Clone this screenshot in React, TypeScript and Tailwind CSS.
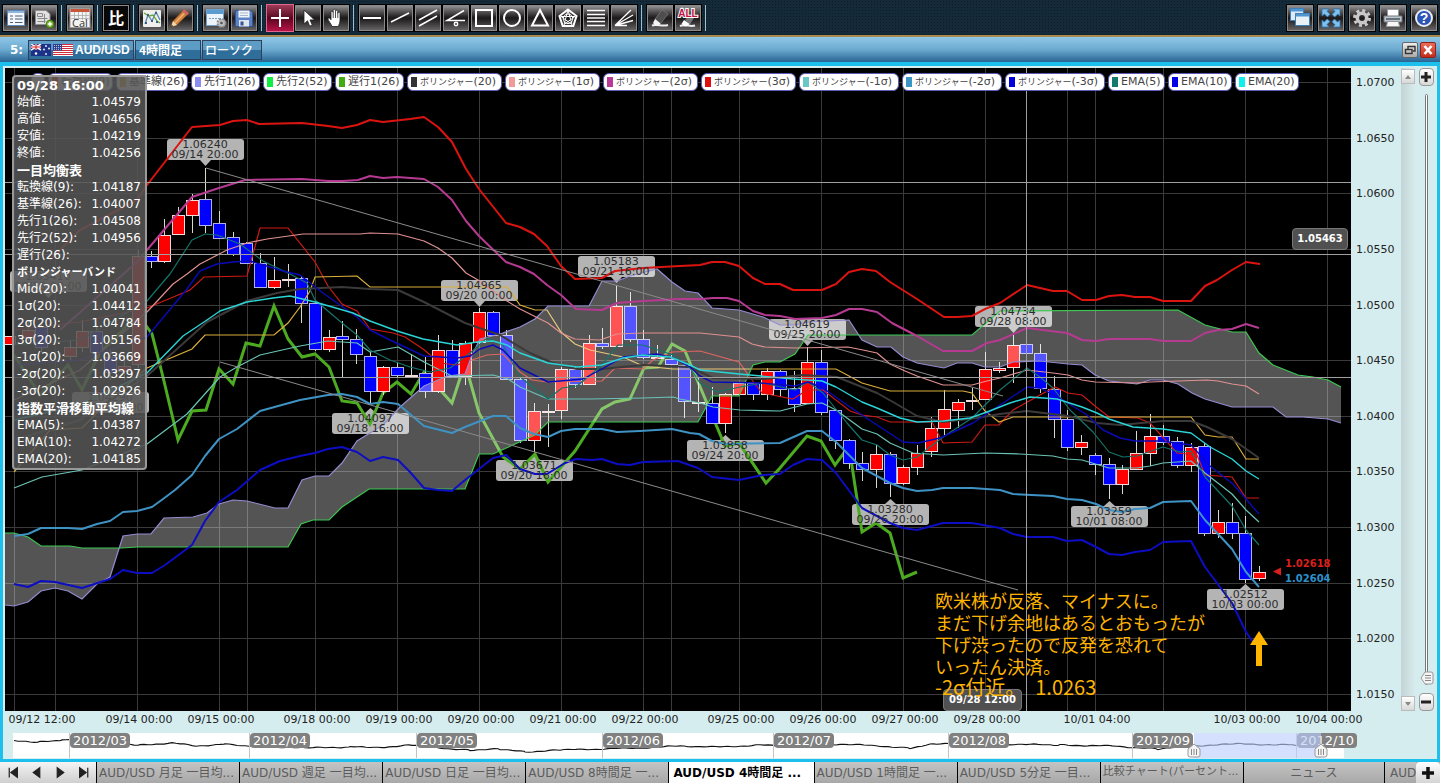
import React from "react";

type Side = "up" | "down";
type Candle = [number, number, number, number, number, "r" | "b"];

const H_GRID = [83, 139, 194, 250, 306, 361, 417, 472, 528, 584, 639, 695];
const V_GRID = [14, 55, 137, 219, 247, 315, 397, 479, 561, 643, 671, 739, 821, 903, 985, 1067, 1095, 1163, 1245, 1327];
const PRICES = ["1.0700", "1.0650", "1.0600", "1.0550", "1.0500", "1.0450", "1.0400", "1.0350", "1.0300", "1.0250", "1.0200", "1.0150"];

const TIMES: [number, string][] = [
  [42, "09/12 12:00"], [139, "09/14 00:00"], [221, "09/15 00:00"], [317, "09/18 00:00"], [399, "09/19 00:00"],
  [481, "09/20 00:00"], [563, "09/21 00:00"], [645, "09/22 00:00"], [741, "09/25 00:00"], [823, "09/26 00:00"],
  [905, "09/27 00:00"], [987, "09/28 00:00"], [1097, "10/01 04:00"], [1247, "10/03 00:00"], [1329, "10/04 00:00"],
];

// centre x, body top, body bottom, high, low, colour
const CANDLES: Candle[] = [
  [9, 336, 344, 336, 344, "r"], [28, 330, 337, 320, 341, "r"], [41, 327, 347, 320, 352, "b"], [70, 347, 356, 340, 360, "r"],
  [82, 331, 347, 320, 352, "r"], [96, 331, 352, 322, 358, "b"], [110, 357, 372, 350, 380, "b"], [124, 366, 371, 360, 380, "r"],
  [138, 256, 364, 250, 368, "r"], [151, 256, 261, 251, 268, "b"], [164, 235, 261, 219, 263, "r"], [178, 215, 234, 207, 235, "r"],
  [192, 200, 215, 194, 233, "r"], [205, 199, 225, 168, 233, "b"], [219, 223, 238, 211, 239, "b"], [233, 237, 254, 232, 256, "b"],
  [246, 243, 263, 242, 264, "b"], [260, 263, 287, 253, 288, "b"], [274, 280, 287, 257, 289, "r"], [288, 279, 280, 264, 287, "r"],
  [301, 278, 303, 276, 323, "b"], [315, 303, 349, 302, 351, "b"], [329, 337, 349, 330, 352, "r"], [342, 336, 339, 321, 377, "b"],
  [356, 339, 354, 329, 364, "b"], [370, 356, 391, 352, 404, "b"], [383, 367, 391, 366, 395, "r"], [397, 367, 375, 363, 377, "b"],
  [411, 375, 376, 354, 377, "r"], [425, 373, 391, 357, 398, "b"], [438, 350, 391, 335, 393, "r"], [452, 350, 376, 340, 377, "b"],
  [465, 343, 376, 341, 385, "r"], [479, 312, 342, 308, 345, "r"], [493, 312, 335, 311, 336, "b"], [506, 335, 379, 330, 380, "b"],
  [520, 379, 440, 378, 443, "b"], [534, 411, 440, 403, 452, "r"], [548, 411, 412, 404, 447, "r"], [561, 369, 410, 367, 419, "r"],
  [575, 369, 384, 367, 388, "b"], [589, 343, 384, 335, 385, "r"], [602, 343, 346, 328, 349, "b"], [616, 306, 346, 285, 347, "r"],
  [630, 306, 339, 292, 342, "b"], [643, 339, 357, 330, 359, "b"], [657, 357, 358, 345, 359, "r"], [671, 359, 364, 355, 367, "b"],
  [684, 365, 401, 363, 418, "b"], [698, 402, 403, 378, 412, "r"], [712, 403, 423, 387, 424, "b"], [725, 394, 423, 393, 433, "r"],
  [739, 383, 394, 382, 395, "r"], [753, 383, 394, 382, 400, "b"], [767, 371, 394, 368, 400, "r"], [780, 371, 389, 370, 397, "b"],
  [794, 388, 404, 371, 412, "b"], [807, 362, 403, 347, 404, "r"], [821, 362, 412, 350, 415, "b"], [835, 410, 440, 409, 449, "b"],
  [849, 440, 463, 439, 469, "b"], [862, 463, 469, 452, 481, "b"], [876, 454, 469, 445, 488, "r"], [890, 454, 483, 452, 497, "b"],
  [903, 467, 483, 465, 485, "r"], [917, 453, 467, 445, 475, "r"], [931, 428, 451, 417, 457, "r"], [944, 409, 428, 390, 435, "r"],
  [958, 402, 410, 399, 428, "r"], [972, 400, 401, 388, 410, "r"], [985, 369, 399, 352, 400, "r"], [999, 368, 370, 362, 373, "r"],
  [1013, 345, 367, 335, 383, "r"], [1026, 344, 353, 340, 356, "b"], [1040, 353, 388, 344, 393, "b"], [1054, 389, 419, 376, 438, "b"],
  [1067, 419, 447, 410, 451, "b"], [1081, 442, 447, 435, 455, "r"], [1095, 455, 464, 453, 475, "b"], [1109, 464, 484, 458, 499, "b"],
  [1122, 469, 484, 465, 494, "r"], [1136, 453, 469, 431, 470, "r"], [1150, 436, 453, 414, 466, "r"], [1163, 436, 442, 425, 445, "b"],
  [1177, 441, 465, 437, 468, "b"], [1191, 447, 465, 443, 472, "r"], [1204, 446, 533, 443, 536, "b"], [1218, 522, 533, 510, 538, "r"],
  [1232, 522, 533, 503, 539, "b"], [1245, 533, 579, 516, 583, "b"], [1259, 572, 578, 566, 581, "r"],
];

const CALLOUTS: [number, number, Side, string, string][] = [
  [48, 271, "down", "1.05410", "09/13 00:00"],
  [110, 392, "up", "1.04290", "09/13 20:00"],
  [205, 139, "down", "1.06240", "09/14 20:00"],
  [616, 256, "down", "1.05183", "09/21 16:00"],
  [479, 280, "down", "1.04965", "09/20 00:00"],
  [370, 413, "up", "1.04097", "09/18 16:00"],
  [534, 460, "up", "1.03671", "09/20 16:00"],
  [807, 319, "down", "1.04619", "09/25 20:00"],
  [725, 440, "up", "1.03858", "09/24 20:00"],
  [1013, 306, "down", "1.04734", "09/28 08:00"],
  [890, 504, "up", "1.03280", "09/26 20:00"],
  [1109, 506, "up", "1.03259", "10/01 08:00"],
  [1245, 589, "up", "1.02512", "10/03 00:00"],
];

const SPAN_B = "5,533 14,533 28,537 41,546 70,546 82,548 122,548 137,547 288,547 301,524 313,520 329,520 342,507 369,489 465,489 479,454 493,454 535,435 548,422 698,422 712,396 739,396 753,365 765,362 780,362 795,354 808,335 972,335 1000,311 1178,310 1205,325 1232,332 1246,332 1259,353 1273,365 1298,375 1313,377 1328,380 1341,387";
const SPAN_A = "5,605 14,606 28,602 41,591 55,588 68,591 82,599 97,584 110,577 123,536 137,534 151,534 164,518 193,517 207,513 219,504 233,500 247,501 275,508 288,508 302,480 315,476 329,476 342,463 357,441 370,433 383,425 400,407 424,386 438,380 447,376 465,374 472,355 480,339 500,334 520,327 535,319 548,306 589,306 602,281 617,281 630,276 657,269 672,282 685,291 698,293 712,308 739,310 763,317 780,325 795,325 808,322 849,320 862,340 877,347 891,347 903,357 917,363 944,368 957,363 972,363 985,367 1000,367 1013,362 1040,361 1068,364 1082,365 1095,375 1109,381 1137,384 1150,380 1163,380 1178,384 1192,393 1205,399 1232,407 1273,407 1286,417 1303,417 1328,419 1341,423";
const CLOUD = SPAN_A + " " + SPAN_B.split(" ").reverse().join(" ");

const CHIKOU = "14,355 40,395 68,365 82,390 100,352 123,330 137,312 147,327 152,334 163,377 178,440 192,411 206,410 219,369 233,384 246,343 260,346 274,306 288,339 302,357 315,354 329,367 342,401 357,403 370,424 383,393 397,382 411,394 424,372 452,403 465,363 479,413 503,457 520,469 535,454 548,482 575,451 602,409 615,402 630,399 644,368 658,367 672,344 685,351 725,446 739,443 766,483 780,468 807,436 821,441 835,465 849,446 862,532 876,523 890,533 903,578 917,572";

const TENKAN = "14,330 80,322 147,308 190,290 204,277 247,276 260,228 288,228 315,262 328,286 342,304 357,311 370,329 393,333 405,337 423,349 440,363 457,365 472,360 487,355 503,354 520,372 532,380 547,382 602,381 615,368 643,369 653,360 672,352 700,351 739,362 752,380 762,393 793,399 807,390 823,390 850,411 862,415 877,417 890,422 932,422 943,443 972,442 985,425 999,425 1013,410 1040,395 1055,387 1068,393 1082,395 1095,406 1109,417 1138,418 1150,423 1177,453 1197,455 1205,475 1232,477 1246,498 1259,498";
const KIJUN = "14,472 50,430 82,428 110,400 147,368 192,349 205,335 274,335 288,323 300,307 310,291 315,277 357,276 370,287 507,287 520,305 535,310 547,310 561,332 575,344 590,350 623,357 643,366 673,369 836,369 862,383 890,391 963,391 972,393 985,411 999,422 1013,417 1191,417 1205,435 1218,437 1232,437 1246,459 1259,459";

const LINES: { name: string; color: string; width: number; points: string }[] = [
  { name: "mid", color: "#3b3939", width: 2, points: "14,440 80,420 147,376 207,322 247,301 277,293 300,289 342,287 370,289 398,290 424,302 465,323 500,335 530,353 553,363 577,369 602,369 643,365 690,367 713,378 763,379 803,375 837,377 862,387 877,393 893,402 917,416 943,422 977,418 1000,414 1027,411 1068,416 1097,423 1120,425 1163,421 1191,421 1207,427 1232,439 1259,458" },
  { name: "s1", color: "#e09090", width: 1.2, points: "14,400 80,370 147,312 173,284 187,274 200,264 227,250 247,243 267,239 303,234 360,234 370,233 398,234 424,241 438,248 452,258 466,273 478,280 507,301 520,309 548,323 561,333 575,339 600,340 617,334 643,333 700,333 739,337 752,344 765,347 795,348 848,347 863,350 877,353 890,364 905,371 917,376 943,385 972,385 987,381 1000,378 1027,370 1053,373 1068,375 1082,380 1095,382 1137,383 1150,382 1207,380 1218,381 1232,384 1246,386 1259,394" },
  { name: "s2", color: "#b63a92", width: 2, points: "60,330 137,262 147,250 192,197 219,188 245,180 302,179 328,181 343,181 358,180 370,176 383,178 397,177 424,179 438,187 452,200 466,221 479,236 506,262 520,267 534,274 547,285 561,295 576,309 602,310 617,303 643,301 680,299 702,299 713,298 727,298 739,301 753,311 765,315 780,316 795,319 822,318 836,315 849,309 862,309 877,312 892,323 917,336 943,351 972,351 987,343 1000,340 1027,328 1067,333 1082,340 1096,341 1109,339 1150,339 1163,341 1191,341 1205,333 1218,330 1232,329 1246,324 1259,328" },
  { name: "s3", color: "#dc1410", width: 2, points: "50,260 80,230 137,200 147,185 192,127 220,125 233,121 247,120 259,124 302,123 328,126 342,128 357,125 370,120 383,122 410,119 424,117 438,127 452,142 466,169 479,189 506,223 520,227 534,234 547,246 561,266 575,279 602,278 615,271 643,268 680,266 700,265 712,262 725,262 739,266 753,278 765,284 780,284 793,290 822,290 836,284 849,272 862,269 876,271 890,282 917,299 944,317 957,317 972,316 985,309 1000,303 1027,285 1053,291 1067,291 1082,300 1096,300 1109,296 1122,295 1135,297 1150,297 1163,301 1191,301 1205,286 1217,280 1232,270 1246,262 1260,264" },
  { name: "m1", color: "#6ac4b6", width: 1.2, points: "14,488 42,477 82,470 147,444 187,414 220,377 237,367 260,355 300,346 328,341 357,343 370,352 398,347 412,355 424,362 440,370 452,376 493,375 508,379 520,387 548,399 590,399 643,398 673,397 680,399 700,403 713,407 740,410 780,411 807,404 822,403 836,410 862,429 877,434 890,443 913,453 943,455 985,453 1020,454 1053,456 1067,459 1082,460 1109,468 1137,468 1150,466 1163,463 1191,461 1205,473 1232,494 1246,510 1259,522" },
  { name: "m2", color: "#3e92c4", width: 2, points: "14,536 28,534 41,528 68,528 82,529 97,524 110,521 123,512 137,511 152,507 163,499 175,490 192,475 205,456 219,439 237,429 260,411 300,400 328,395 342,394 357,397 370,404 383,402 398,404 424,426 452,433 465,427 493,416 506,416 520,428 534,434 548,437 561,431 575,429 602,429 617,432 640,431 672,429 690,433 699,434 712,441 725,444 780,443 807,431 822,431 836,442 862,468 890,483 903,488 917,491 932,490 943,488 972,488 1000,490 1013,494 1053,496 1067,499 1082,500 1096,504 1109,510 1122,512 1135,509 1150,508 1163,502 1191,501 1205,520 1232,549 1246,572 1259,587" },
  { name: "m3", color: "#0d0dc4", width: 2, points: "14,584 28,587 41,581 55,582 82,588 110,579 123,570 137,573 152,573 165,565 192,545 205,521 219,502 237,490 260,470 280,461 300,456 315,453 328,449 342,447 357,452 370,461 383,457 398,460 410,472 424,488 438,490 452,491 465,480 493,458 506,455 520,469 535,474 547,474 565,463 576,459 592,460 602,459 617,464 630,465 643,462 678,461 698,468 712,477 739,480 763,475 780,474 793,465 807,459 822,460 836,473 862,508 890,523 903,528 917,530 943,523 972,523 1000,528 1013,534 1027,537 1053,537 1067,541 1082,540 1096,547 1109,554 1122,555 1135,552 1150,550 1163,542 1191,541 1205,567 1217,583 1232,603 1246,632 1255,645" },
  { name: "ema5", color: "#14756a", width: 1.2, points: "14,345 80,340 147,301 170,274 192,240 205,234 217,235 240,244 263,261 290,274 307,283 315,300 342,323 357,335 370,350 390,360 410,367 430,372 450,368 470,353 487,338 503,345 520,377 548,399 562,388 577,386 600,367 618,345 643,345 673,355 690,368 700,383 717,392 740,387 763,383 795,390 808,382 823,393 847,423 862,440 877,445 890,455 903,460 917,457 943,437 972,418 1000,390 1027,368 1040,377 1053,388 1070,410 1093,432 1109,452 1123,457 1137,456 1163,447 1180,452 1191,451 1205,477 1232,506 1246,530 1259,545" },
  { name: "ema10", color: "#0a0ab8", width: 1.4, points: "14,365 80,360 147,337 187,289 200,271 217,264 233,262 250,261 283,271 300,275 323,293 357,317 370,330 390,340 424,356 457,358 470,356 480,349 493,345 503,350 520,368 548,382 583,379 602,369 623,357 657,354 673,358 690,367 700,376 712,382 760,383 795,386 808,382 823,388 847,405 877,425 903,442 918,443 940,438 973,423 1000,405 1027,387 1040,388 1063,400 1087,415 1103,430 1120,438 1135,441 1160,441 1191,445 1210,466 1233,484 1259,514" },
  { name: "ema20", color: "#2bd4d6", width: 1.4, points: "14,420 80,405 147,373 183,336 207,320 220,311 247,302 273,298 290,296 315,302 353,313 370,321 397,331 423,339 457,345 477,342 493,341 507,345 520,353 548,363 577,367 602,365 623,358 643,355 670,357 690,365 700,370 739,374 793,379 822,381 836,387 862,402 877,408 900,418 917,422 943,421 970,418 987,412 1010,403 1030,397 1057,399 1082,407 1097,413 1109,419 1133,427 1163,429 1191,433 1210,447 1232,459 1246,471 1259,479" },
];

const LEGEND: { kana?: string; text: string; color: string; w: string }[] = [
  { text: "", color: "bg-white", w: "w-[14px]" },
  { text: "転換線(9)", color: "bg-[#dd2211]", w: "w-[65px]" },
  { text: "基準線(26)", color: "bg-[#e0a020]", w: "w-[72px]" },
  { text: "先行1(26)", color: "bg-[#8b8bf0]", w: "w-[69px]" },
  { text: "先行2(52)", color: "bg-[#10ee44]", w: "w-[69px]" },
  { text: "遅行1(26)", color: "bg-[#43ab12]", w: "w-[69px]" },
  { kana: "ボリンジャー", text: "(20)", color: "bg-[#333333]", w: "w-[95px]" },
  { kana: "ボリンジャー", text: "(1σ)", color: "bg-[#f29a9a]", w: "w-[95px]" },
  { kana: "ボリンジャー", text: "(2σ)", color: "bg-[#b93a94]", w: "w-[95px]" },
  { kana: "ボリンジャー", text: "(3σ)", color: "bg-[#e00f0f]", w: "w-[95px]" },
  { kana: "ボリンジャー", text: "(-1σ)", color: "bg-[#68c8c8]", w: "w-[100px]" },
  { kana: "ボリンジャー", text: "(-2σ)", color: "bg-[#3a95c6]", w: "w-[100px]" },
  { kana: "ボリンジャー", text: "(-3σ)", color: "bg-[#0000dd]", w: "w-[100px]" },
  { text: "EMA(5)", color: "bg-[#147a6c]", w: "w-[57px]" },
  { text: "EMA(10)", color: "bg-[#0000e6]", w: "w-[64px]" },
  { text: "EMA(20)", color: "bg-[#12eeee]", w: "w-[64px]" },
];

const INFO: [string, string?][] = [
  ["始値:", "1.04579"], ["高値:", "1.04656"], ["安値:", "1.04219"], ["終値:", "1.04256"],
  ["一目均衡表"],
  ["転換線(9):", "1.04187"], ["基準線(26):", "1.04007"], ["先行1(26):", "1.04508"], ["先行2(52):", "1.04956"], ["遅行(26):", ""],
  ["ボリンジャーバンド"],
  ["Mid(20):", "1.04041"], ["1σ(20):", "1.04412"], ["2σ(20):", "1.04784"], ["3σ(20):", "1.05156"],
  ["-1σ(20):", "1.03669"], ["-2σ(20):", "1.03297"], ["-3σ(20):", "1.02926"],
  ["指数平滑移動平均線"],
  ["EMA(5):", "1.04387"], ["EMA(10):", "1.04272"], ["EMA(20):", "1.04185"],
];

const NOTE = ["欧米株が反落、マイナスに。", "まだ下げ余地はあるとおもったが", "下げ渋ったので反発を恐れて", "いったん決済。"];
const NOTE_PRICE = "-2σ付近。　1.0263";

const TABS = [
  "AUD/USD 月足 一目均...", "AUD/USD 週足 一目均...", "AUD/USD 日足 一目均...", "AUD/USD 8時間足 一...", "AUD/USD 4時間足 ...",
  "AUD/USD 1時間足 一...", "AUD/USD 5分足 一目...", "比較チャート(パーセント...", "ニュース",
];

const MONTHS: [number, string][] = [
  [69, "2012/03"], [249, "2012/04"], [416, "2012/05"], [602, "2012/06"], [773, "2012/07"], [948, "2012/08"], [1132, "2012/09"], [1296, "2012/10"],
];

const MINI_BASE: [number, number][] = [
  [14, 741], [40, 742], [62, 740], [80, 740], [110, 742], [140, 745], [172, 743], [196, 746], [225, 744], [250, 746], [305, 748],
  [350, 747], [385, 747], [412, 745], [440, 748], [470, 750], [500, 749], [525, 752], [560, 750], [600, 749], [640, 748], [680, 746],
  [720, 747], [760, 745], [800, 747], [840, 744], [880, 746], [910, 748], [933, 744], [990, 744], [1060, 745], [1112, 746],
  [1158, 749], [1190, 746], [1237, 744], [1294, 745], [1323, 747],
];

function miniPoints(): string {
  const out: string[] = [];
  for (let k = 0; k < MINI_BASE.length - 1; k++) {
    const [x0, y0] = MINI_BASE[k];
    const [x1, y1] = MINI_BASE[k + 1];
    for (let x = x0; x < x1; x += 4) {
      const base = y0 + ((y1 - y0) * (x - x0)) / (x1 - x0);
      const noise = Math.sin(x * 1.7) * 0.4 + Math.sin(x * 0.43) * 0.3;
      out.push(`${x},${(base + noise).toFixed(1)}`);
    }
  }
  return out.join(" ");
}

const W = { stroke: "#fff", strokeWidth: 2, fill: "none" } as const;
const T = { stroke: "#fff", strokeWidth: 1.3, fill: "none" } as const;

const I: Record<string, React.ReactNode> = {
  list: (
    <g>
      <rect x="3.5" y="4.5" width="17" height="15" fill="#f4f8fc" stroke="#5d88b8" />
      <rect x="4" y="5" width="16" height="2" fill="#8fb5dc" />
      <path d="M6 10h3M6 13h3M6 16.500h3M11 10h7.500M11 13h7.500M11 16.500h7.500" stroke="#4c5f78" strokeWidth="1.2" />
    </g>
  ),
  add: (
    <g>
      <path d="M3.500 4.500H14l4 3.500V18.500H3.500Z" fill="#e2e2e2" stroke="#8d8d8d" />
      <path d="M5.500 7.500h5v3h-5zM5.500 12.500h10M5.500 15.500h8M12.500 8v9" stroke="#888" fill="none" />
      <circle cx="18" cy="18" r="3.800" fill="#79b530" stroke="#467a12" />
      <path d="M18 15.800v4.400M15.800 18h4.400" stroke="#fff" strokeWidth="1.4" />
    </g>
  ),
  cal: (
    <g>
      <rect x="2" y="2.500" width="20" height="19" fill="#f3f3f3" stroke="#999" />
      <rect x="2.500" y="3" width="19" height="3" fill="#c9553b" />
      <path d="M3 9.500h18M3 12.500h18M6.500 6v8M10.500 6v8M14.500 6v8M18 6v8" stroke="#a9a9a9" strokeWidth=".8" />
      <text x="12" y="20.500" fontSize="11" textAnchor="middle" fill="#333" fontFamily="Open Sans, sans-serif">Cal</text>
    </g>
  ),
  compare: (
    <g>
      <rect width="24" height="24" fill="#080808" />
      <text x="12" y="18" fontSize="16" fontWeight="700" textAnchor="middle" fill="#fff" fontFamily="Noto Sans CJK JP, sans-serif">比</text>
    </g>
  ),
  chart: (
    <g>
      <rect x="3" y="4" width="18" height="17" rx="1" fill="#efefec" />
      <path d="M5 18 8 9l4 6 4-9 4 8" stroke="#5b86b7" fill="none" strokeWidth="1.3" />
      <path d="M4 7l5 3 4-1 4 6 3 2" stroke="#68a53c" fill="none" strokeWidth="1.3" />
      <path d="M7 8h2v2H7zM11 14h2v2h-2zM15 6h2v2h-2zM16 15h2v2h-2zM5 16h2v2H5z" fill="#3b5f8a" />
    </g>
  ),
  pencil: (
    <g>
      <path d="M3 21l2-6L16 3.500l4.500 4L9 19z" fill="#cd803c" stroke="#83471b" strokeWidth=".8" />
      <path d="M7 17 18 5.500" stroke="#eeb375" strokeWidth="1.5" />
      <path d="M14 5.500l2-2.500 5 4-2 2.500z" fill="#c9655a" />
      <path d="M3 21l2-6 4 4z" fill="#f0d9ae" />
      <path d="M3 21l.8-2.300 1.500 1.500z" fill="#222" />
    </g>
  ),
  config: (
    <g>
      <rect x="2.500" y="3.500" width="17" height="16" fill="#edf3f8" stroke="#6fa1cb" />
      <rect x="3" y="4" width="16" height="4" fill="#5c9bd0" />
      <path d="M5 12.500h12" stroke="#6fa1cb" strokeDasharray="2 1" />
      <circle cx="17.500" cy="17" r="4" fill="#c3c3c3" stroke="#8b8b8b" strokeWidth="2" strokeDasharray="2 1.200" />
      <circle cx="17.500" cy="17" r="3" fill="#bdbdbd" />
      <circle cx="17.500" cy="17" r="1.300" fill="#555" />
    </g>
  ),
  save: (
    <g>
      <path d="M3.500 4.500h15l2 2V20.500h-17z" fill="#5a83c9" stroke="#31529a" />
      <rect x="6.500" y="4.500" width="11" height="7" fill="#f2f5fa" />
      <path d="M8 7h8M8 9.500h8" stroke="#aab7cb" />
      <rect x="7" y="14" width="10" height="6.500" fill="#dfe6f0" />
      <rect x="8.500" y="15.500" width="3" height="4" fill="#39558f" />
    </g>
  ),
  cross: <path d="M12 3v18M3 12h18" {...W} />,
  pointer: <path d="M8 4v14l3.500-3.200 2.200 5.400 2.600-1.100-2.300-5.200H18.500z" fill="#fff" stroke="#222" strokeWidth=".8" />,
  hand: (
    <path d="M8 20.500c-1-3-4-6-4-7.500 0-1.400 1.600-1.400 3 .7V6.500c0-1.700 2.200-1.700 2.200 0V4.500c0-1.800 2.300-1.800 2.300 0v1c0-1.700 2.300-1.700 2.300 0v1.700c0-1.500 2.200-1.500 2.200 0V14c0 3-1 4-1.500 6.500zM9.200 6.500V12M11.500 5.500V12M13.800 6.500V12" fill="#fff" stroke="#222" strokeWidth=".8" />
  ),
  hline: <path d="M3 12h18" {...W} />,
  trend: <path d="M3 16 21 7" {...T} strokeWidth={1.5} />,
  parallel: <path d="M3 14 21 4M3 20 21 10" {...T} strokeWidth={1.5} />,
  angle: (
    <g {...T} strokeWidth={1.5}>
      <path d="M20 4.500 3 14.500h18" />
      <circle cx="12" cy="18" r="1.700" />
    </g>
  ),
  square: <rect x="4" y="4" width="16" height="16" {...W} />,
  circle: <circle cx="12" cy="12" r="8" {...W} />,
  triangle: <path d="M12 4 20 19.500H4Z" {...W} />,
  penta: (
    <g {...T}>
      <path d="M12 3.500 20.500 10 17.300 20H6.700L3.500 10Z" strokeWidth="2" />
      <circle cx="12" cy="12.800" r="4.800" strokeWidth="1" />
      <path d="M12 4 16 18.500 5 10.500h14L8 18.500z" strokeWidth="1" />
    </g>
  ),
  fib: <path d="M3 4.500h18M3 8.500h18M3 12h18M3 15.500h18M3 19.500h18" {...T} />,
  fan: <path d="M3 19.500 19 4M3 19.500 21 9M3 19.500 21 14.500M3 19.500h12" {...T} />,
  eraser: (
    <g>
      <path d="M4 19.500c5-2 10 1.500 16-.5" stroke="#eee" strokeWidth="2" fill="none" />
      <path d="M7 13 14 4l6 4-7.500 9.500z" fill="#4e4e4e" stroke="#777" strokeWidth=".8" />
      <path d="M7 13l5.500 4.500-2 2-3 .5L5 17z" fill="#f4f4f4" />
    </g>
  ),
  eraseAll: (
    <g>
      <path d="M4 20c5-2 10 1 15-.5" stroke="#eee" strokeWidth="2" fill="none" />
      <path d="M9 14 13 9l5 3-4.500 7z" fill="#777" />
      <path d="M8 14l5.500 4-2 2-3 .5L5.500 18z" fill="#fff" />
      <text x="12" y="10.500" fontSize="10" fontWeight="700" textAnchor="middle" fill="#c4103f" stroke="#fff" strokeWidth="2" paintOrder="stroke" fontFamily="Liberation Sans, sans-serif">ALL</text>
    </g>
  ),
  windows: (
    <g stroke="#3f80b8">
      <rect x="2.500" y="2.500" width="13" height="12" fill="#dfeaf3" />
      <rect x="3" y="3" width="12" height="2.500" fill="#4f97d2" stroke="none" />
      <rect x="7.500" y="7.500" width="14" height="12" fill="#e9f0f6" />
      <rect x="8" y="8" width="13" height="2.500" fill="#4f97d2" stroke="none" />
    </g>
  ),
  expand: (
    <g fill="#7fc0ee" stroke="#2c73b0" strokeWidth=".8">
      <path d="M3 3h7L8 5.200l3 3L8.500 11l-3-3L3 10z" />
      <path d="M21 3v7l-2.200-2-3 3L13 8.500l3-3L14 3z" />
      <path d="M3 21v-7l2.200 2 3-3L11 15.500l-3 3 2 2.500z" />
      <path d="M21 21h-7l2-2.200-3-3L15.500 13l3 3 2.500-2z" />
    </g>
  ),
  gear: (
    <g>
      <circle cx="12" cy="12" r="7.500" fill="none" stroke="#c9c9c9" strokeWidth="3" strokeDasharray="3 2.890" />
      <circle cx="12" cy="12" r="4.700" fill="none" stroke="#c9c9c9" strokeWidth="3.600" />
    </g>
  ),
  print: (
    <g>
      <rect x="6.500" y="3.500" width="11" height="7" fill="#fff" stroke="#999" />
      <path d="M3 10h18v6H3z" fill="#bcc5cd" stroke="#717980" />
      <path d="M5 13h14" stroke="#4b545c" strokeWidth="1.500" />
      <path d="M6.500 15.500h11l1 5h-13z" fill="#f6f6f6" stroke="#999" />
    </g>
  ),
  help: (
    <g>
      <circle cx="12" cy="12" r="8" fill="#2c54b6" stroke="#e8edf6" strokeWidth="2" />
      <text x="12" y="17" fontSize="14" fontWeight="700" textAnchor="middle" fill="#fff" fontFamily="Liberation Sans, sans-serif">?</text>
    </g>
  ),
};

const GROUPS: string[][] = [
  ["list", "add"], ["cal"], ["compare"], ["chart", "pencil"], ["config", "save"], ["cross", "pointer", "hand"],
  ["hline", "trend", "parallel", "angle", "square", "circle", "triangle", "penta", "fib", "fan"], ["eraser", "eraseAll"],
];

function ToolButton({ name }: { name: string }) {
  const active = name === "cross";
  return (
    <button
      type="button"
      aria-label={name}
      className={
        active
          ? "flex h-7 w-7 items-center justify-center border border-[#e0688c] bg-linear-to-b from-[#a03a58] via-[#5a0720] to-[#b8124a]"
          : "flex h-7 w-7 items-center justify-center border border-black bg-linear-to-b from-[#9d9b9c] via-[#1b191a] to-[#6b696a] inset-ring inset-ring-[#8a8a8a]"
      }
    >
      <svg viewBox="0 0 24 24" className="h-6 w-6 shrink-0">{I[name]}</svg>
    </button>
  );
}

function Toolbar() {
  return (
    <header className="flex h-[37px] items-center justify-between border-b-2 border-[#a8894e] bg-[#152a38] bg-[radial-gradient(#0d1c27_1px,transparent_1px)] bg-size-[3px_3px] pr-0.5 pl-0.5">
      <div className="flex items-center">
        {GROUPS.map((g) => (
          <div key={g[0]} className="flex items-center">
            {g.map((n) => <ToolButton key={n} name={n} />)}
            <span className="mr-1 ml-[3px] h-[26px] w-px bg-[#9fbfd0]" />
          </div>
        ))}
      </div>
      <div className="flex items-center gap-[3px]">
        {["windows", "expand", "gear", "print", "help"].map((n) => <ToolButton key={n} name={n} />)}
      </div>
    </header>
  );
}

function Flags() {
  return (
    <svg viewBox="0 0 42 12" className="h-3 w-[42px] shrink-0">
      <rect width="20" height="12" fill="#1c3289" />
      <path d="M0 0l10 6M10 0 0 6" stroke="#fff" strokeWidth="1.500" />
      <path d="M5 0v6M0 3h10" stroke="#fff" strokeWidth="2.200" />
      <path d="M5 0v6M0 3h10" stroke="#d22" strokeWidth="1.200" />
      <g fill="#fff">
        <circle cx="5" cy="9.500" r="1.200" /><circle cx="15" cy="2" r=".9" /><circle cx="13" cy="5.500" r=".9" /><circle cx="18" cy="4.500" r=".9" /><circle cx="15" cy="10" r=".9" />
      </g>
      <rect x="22" width="20" height="12" fill="#fff" />
      <path d="M22 .500h20M22 2.500h20M22 4.500h20M22 6.500h20M22 8.500h20M22 10.500h20" stroke="#cf2f3c" strokeWidth="1" />
      <rect x="22" width="9" height="6.500" fill="#2b3f8e" />
      <path d="M23 1.500h7M23 3.500h7M23 5.300h7" stroke="#fff" strokeWidth=".7" strokeDasharray="1 1" />
    </svg>
  );
}

function TitleBar() {
  const box = "flex h-5 items-center border border-[#2e3f5c] bg-linear-to-b from-[#5d9cc4] from-50% to-[#2f6d9a] to-50% leading-4 text-white";
  return (
    <div className="flex h-[25px] items-center bg-linear-to-b from-[#8fc8e8] via-[#6caad0] to-[#276593] pr-1 pl-[10px]">
      <span className="w-[18px] text-[12px] font-bold text-white">5:</span>
      <div className="flex gap-px">
        <button type="button" className={box + " w-[106px] gap-[2px] pl-[2px] font-['Liberation_Sans',sans-serif] text-[12px] font-bold"}>
          <Flags />
          AUD/USD
        </button>
        <button type="button" className={box + " w-[66px] pl-[3px] font-['Noto_Sans_CJK_JP',sans-serif] text-[12px] font-bold"}>4時間足</button>
        <button type="button" className={box + " w-[60px] pl-[2px] font-['Noto_Sans_CJK_JP',sans-serif] text-[12px] font-medium"}>ローソク</button>
      </div>
      <div className="ml-auto flex gap-[2px]">
        <button type="button" aria-label="restore" className="flex h-4 w-4 items-center justify-center rounded-xs border border-[#666] bg-linear-to-b from-[#eee] to-[#aaa]">
          <svg viewBox="0 0 12 12" className="h-3 w-3 shrink-0" fill="none" stroke="#333" strokeWidth="1.400">
            <path d="M4 5V2.500h7V7H9" />
            <rect x="1.500" y="5.500" width="6.500" height="4" />
          </svg>
        </button>
        <button type="button" aria-label="close" className="flex h-4 w-4 items-center justify-center rounded-xs border border-[#8c2317] bg-linear-to-b from-[#ea6a58] to-[#c42a1b]">
          <svg viewBox="0 0 12 12" className="h-3 w-3 shrink-0"><path d="M2.500 2 9.500 10M9.500 2 2.500 10" stroke="#fff" strokeWidth="2.600" /></svg>
        </button>
      </div>
    </div>
  );
}

function Plot() {
  return (
    <svg viewBox="5 68 1346 643" className="block h-auto w-full bg-black" fontFamily="DejaVu Sans, sans-serif">
      <g stroke="#3a3a3a">
        {H_GRID.map((y) => <path key={y} d={`M5 ${y - 0.5}H1351`} />)}
        {V_GRID.map((x) => <path key={x} d={`M${x + 0.5} 68V711`} />)}
      </g>
      <g>
        {CALLOUTS.map(([x, y, side, , time]) => (
          <g key={time}>
            <rect x={x - 38} y={y} width="77" height="21" rx="3" fill="#b4b4b4" />
            <path d={side === "down" ? `M${x - 5} ${y + 21}h11l-5.500 6z` : `M${x - 5} ${y}h11l-5.500 -5z`} fill="#b4b4b4" />
          </g>
        ))}
      </g>
      <polyline points={CHIKOU} fill="none" stroke="#4cab20" strokeWidth="3" />
      <g>
        {CANDLES.map(([x, top, bottom, high, low, c]) => (
          <g key={x}>
            <path d={`M${x + 0.5} ${high}V${low}`} stroke="#d8d8cf" />
            <rect
              x={x - 5.5}
              y={top + 0.5}
              width="12"
              height={Math.max(bottom - top, 1)}
              fill={c === "r" ? "#ff0000" : "#0000ff"}
              stroke={c === "r" ? "#f0dcdc" : "#b0b0e8"}
            />
          </g>
        ))}
      </g>
      <polyline points={TENKAN} fill="none" stroke="#d01a14" strokeWidth="1.200" />
      <polyline points={KIJUN} fill="none" stroke="#dcae3c" strokeWidth="1.200" />
      <polygon points={CLOUD} fill="#ffffff" fillOpacity=".33" />
      <polyline points={SPAN_A} fill="none" stroke="#948cd2" strokeWidth="1.200" />
      <polyline points={SPAN_B} fill="none" stroke="#3cc850" strokeWidth="1.200" />
      {LINES.map((l) => (
        <polyline key={l.name} points={l.points} fill="none" stroke={l.color} strokeWidth={l.width} strokeLinejoin="round" />
      ))}
      <g fontSize="11" fill="#2c2c2c" textAnchor="middle">
        {CALLOUTS.map(([x, y, , price, time]) => (
          <g key={time}>
            <text x={x} y={y + 9}>{price}</text>
            <text x={x} y={y + 19}>{time}</text>
          </g>
        ))}
      </g>
      <path d="M206 168 1003 396M220 362 1018 590" stroke="#8a8a8a" fill="none" />
      <path d="M5 182.500H1351M5 254.500H1351M5 377.500H1351M1026.500 68V711" stroke="#a0a0a0" fill="none" />
      <path d="M1273 571.500 1281 567.500V575.500Z" fill="#dc1f1a" />
      <g fontSize="10" fontWeight="700">
        <text x="1285" y="567" fill="#dc1f1a">1.02618</text>
        <text x="1285" y="582" fill="#2b92cc">1.02604</text>
      </g>
      <path d="M1259 631 1268 645H1262V666H1256V645H1250Z" fill="#ffb400" />
    </svg>
  );
}

function InfoPanel() {
  return (
    <dl className="absolute top-[7px] left-[7px] w-[135px] rounded border-2 border-[#999] bg-[#555]/88 pr-1 pl-[3px] text-[12px] leading-[17px] text-white">
      <div className="text-[13px] leading-[17px] font-bold">09/28 16:00</div>
      {INFO.map(([k, v]) =>
        v === undefined ? (
          <div key={k} className={k.startsWith("ボ") ? "h-[17px] text-[11px] font-bold whitespace-nowrap" : "h-[17px] text-[13px] font-bold whitespace-nowrap"}>{k}</div>
        ) : (
          <div key={k} className="flex h-[17px] justify-between whitespace-nowrap">
            <dt>{k}</dt>
            <dd>{v}</dd>
          </div>
        ),
      )}
    </dl>
  );
}

function ChartArea() {
  const bubble = "absolute rounded border border-[#777] bg-[#505050] text-center text-[10px] font-bold text-white";
  const sq = "flex items-center justify-center border border-[#999] bg-linear-to-b from-white to-[#d8d8d8]";
  return (
    <div className="flex">
      <div className="relative min-w-0 flex-1">
        <Plot />
        <div className="absolute top-[5px] left-[26px] flex gap-[3px]">
          {LEGEND.map((l, i) => (
            <div key={i} className={"flex h-[18px] items-center gap-[3px] overflow-hidden rounded-md border border-[#5a5ab8] bg-white pl-[3px] text-[11px] whitespace-nowrap text-[#444] " + l.w}>
              <span className={"h-[10px] w-[6px] shrink-0 " + l.color} />
              <span className="leading-4">
                {l.kana && <span className="text-[9px]">{l.kana}</span>}
                {l.text}
              </span>
            </div>
          ))}
        </div>
        <div className={bubble + " top-[160px] right-[3px] h-[22px] w-[56px] leading-5"}>1.05463</div>
        <div className={bubble + " bottom-0 left-[938px] h-[22px] w-[79px] leading-5"}>09/28 12:00</div>
        <p className="absolute top-[521px] left-[930px] font-['Noto_Sans_CJK_JP',sans-serif] text-[18px] leading-[22px] whitespace-nowrap text-[#ffb400]">
          {NOTE.map((n) => <span key={n} className="block">{n}</span>)}
          <span className="block text-[20px] leading-5">{NOTE_PRICE}</span>
        </p>
        <InfoPanel />
      </div>
      <div className="flex w-[50px] flex-col justify-between pt-[7px] pb-2 pl-[5px] text-[11px] text-[#222]">
        {PRICES.map((p) => <span key={p} className="leading-4">{p}</span>)}
      </div>
      <div className="flex w-[14px] flex-col justify-between bg-linear-to-r from-[#c2d4d6] to-[#d9eced] pt-px">
        <button type="button" aria-label="scroll up" className={sq + " h-[15px] border-[#bbb]"}>
          <svg viewBox="0 0 8 8" className="h-2 w-2"><path d="M4 2 7 6H1z" fill="#888" /></svg>
        </button>
        <button type="button" aria-label="scroll down" className={sq + " h-[15px] border-[#bbb]"}>
          <svg viewBox="0 0 8 8" className="h-2 w-2"><path d="M4 6 7 2H1z" fill="#888" /></svg>
        </button>
      </div>
      <div className="flex w-[22px] flex-col items-center gap-2">
        <button type="button" aria-label="zoom in" className={sq + " h-[18px] w-[15px] rounded"}>
          <svg viewBox="0 0 10 10" className="h-[10px] w-[10px] shrink-0"><path d="M5 0v10M0 5h10" stroke="#222" strokeWidth="3" /></svg>
        </button>
        <div className="relative flex w-full flex-1 justify-center">
          <span className="h-full w-[3px] rounded border border-[#777] bg-white" />
          <input type="range" aria-label="zoom" min="0" max="100" defaultValue="3" className="absolute inset-0 h-full w-full opacity-0" />
          <svg viewBox="0 0 14 14" className="pointer-events-none absolute bottom-0 left-[5px] h-[14px] w-[14px]">
            <path d="M1 7 5 1h6q2 0 2 2v8q0 2-2 2H5z" fill="#f4f4f4" stroke="#999" />
            <path d="M5 4.500h6M5 7h6M5 9.500h6" stroke="#888" />
          </svg>
        </div>
        <button type="button" aria-label="zoom out" className={sq + " h-[18px] w-[15px] rounded"}>
          <svg viewBox="0 0 10 10" className="h-[10px] w-[10px] shrink-0"><path d="M0 5h10" stroke="#222" strokeWidth="3" /></svg>
        </button>
      </div>
    </div>
  );
}

function TimeAxis() {
  return (
    <svg viewBox="5 711 1432 22" className="block h-auto w-full" fontFamily="DejaVu Sans, sans-serif" fontSize="11" fill="#222">
      {TIMES.map(([x, t]) => <text key={t} x={x} y="723" textAnchor="middle">{t}</text>)}
    </svg>
  );
}

function Overview() {
  return (
    <svg viewBox="5 733 1432 26" className="block h-auto w-full" fontFamily="DejaVu Sans, sans-serif">
      <rect x="13" y="733" width="1331" height="25" fill="#fff" />
      <polyline points={miniPoints()} fill="none" stroke="#111" strokeWidth="1.100" />
      {MONTHS.map(([x, m]) => (
        <g key={m}>
          <path d={`M${x + 0.5} 733V758`} stroke="#c4c4c4" />
          <rect x={x + 1} y="733" width="60" height="15" rx="4" fill="#808080" />
          <text x={x + 4} y="745" fontSize="13" fill="#fff">{m}</text>
        </g>
      ))}
      <rect x="1194" y="733" width="127" height="25" fill="#b9cdfb" fillOpacity=".62" />
      {[1194, 1321].map((x) => (
        <g key={x}>
          <path d={`M${x - 6} 749l6 -5 6 5v6q0 2 -2 2h-8q-2 0 -2 -2z`} fill="#f4f4f4" stroke="#999" />
          <path d={`M${x - 2.5} 749v6M${x} 749v6M${x + 2.5} 749v6`} stroke="#888" />
        </g>
      ))}
    </svg>
  );
}

function BottomTabs() {
  const nav = ["M4 2v12M14 2 6 8l8 6z", "M12 2 4 8l8 6z", "M4 2l8 6-8 6z", "M2 2l8 6-8 6zM12 2v12"];
  return (
    <nav className="flex h-[21px] bg-[#b2b2b2] text-[12px]">
      <div className="flex w-24 items-center justify-around bg-linear-to-b from-[#f4f4f4] to-[#cfcfcf]">
        {nav.map((d) => (
          <button key={d} type="button" aria-label="tab navigation" className="flex">
            <svg viewBox="0 0 16 16" className="h-[13px] w-[13px]"><path d={d} fill="#222" stroke="#222" strokeWidth="1.500" /></svg>
          </button>
        ))}
      </div>
      {TABS.map((t, i) => (
        <button
          key={t}
          type="button"
          className={
            i === 4
              ? "min-w-0 flex-1 overflow-hidden border-l border-black bg-white pl-1 text-left text-[12px] font-bold whitespace-nowrap text-black"
              : i === 8
                ? "min-w-0 flex-1 overflow-hidden border-l border-black bg-linear-to-b from-[#c4c4c4] to-[#a8a8a8] text-center whitespace-nowrap text-[#5c5c5c]"
                : i === 7
                  ? "min-w-0 flex-1 overflow-hidden border-l border-black bg-linear-to-b from-[#c4c4c4] to-[#a8a8a8] pl-0.5 text-left text-[11px] whitespace-nowrap text-[#5c5c5c]"
                  : "min-w-0 flex-1 overflow-hidden border-l border-black bg-linear-to-b from-[#c4c4c4] to-[#a8a8a8] pl-0.5 text-left text-[12px] whitespace-nowrap text-[#5c5c5c]"
          }
        >
          {t}
        </button>
      ))}
      <button type="button" className="w-8 overflow-hidden border-l border-black bg-linear-to-b from-[#c4c4c4] to-[#a8a8a8] pl-[5px] text-left text-[#5c5c5c]">AUD</button>
      <button type="button" aria-label="add tab" className="flex w-6 items-center justify-center rounded-t bg-linear-to-b from-white to-[#d4d4d4]">
        <svg viewBox="0 0 12 12" className="h-3 w-3"><path d="M6 0v12M0 6h12" stroke="#111" strokeWidth="3.500" /></svg>
      </button>
    </nav>
  );
}

export default function App() {
  return (
    <div className="flex min-h-screen flex-col bg-[#152a38] font-['DejaVu_Sans','Noto_Sans_CJK_JP',sans-serif]">
      <Toolbar />
      <TitleBar />
      <main className="border-x-[3px] border-t-4 border-b-[3px] border-[#1dc0ec] bg-[#d5edee] pt-0.5">
        <div className="pl-0.5">
          <ChartArea />
          <TimeAxis />
          <Overview />
        </div>
      </main>
      <BottomTabs />
    </div>
  );
}
